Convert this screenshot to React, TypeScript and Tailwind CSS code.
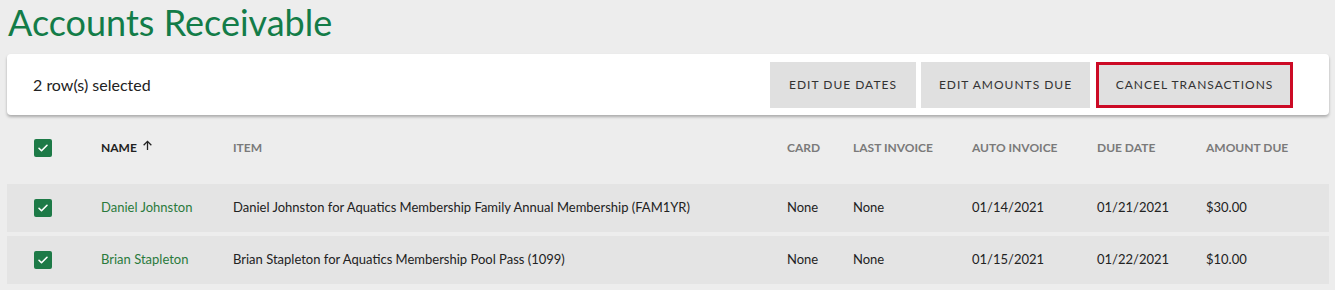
import React from "react";

const font = { fontFamily: "Lato, 'Open Sans', sans-serif" };

function Box() {
  return (
    <div className="w-[18px] h-[18px] rounded-[2px] bg-[#1d7a47] flex items-center justify-center">
      <svg width="12" height="12" viewBox="0 0 24 24" fill="none" stroke="white" strokeWidth="3.2" strokeLinecap="round" strokeLinejoin="round">
        <path d="M4 12.5l5 5L20 6.5" />
      </svg>
    </div>
  );
}

const cols = "grid grid-cols-[94px_132px_554px_66px_119px_125px_109px_1fr] items-center";

const rows = [
  {
    name: "Daniel Johnston",
    item: "Daniel Johnston for Aquatics Membership Family Annual Membership (FAM1YR)",
    card: "None",
    last: "None",
    auto: "01/14/2021",
    due: "01/21/2021",
    amt: "$30.00",
  },
  {
    name: "Brian Stapleton",
    item: "Brian Stapleton for Aquatics Membership Pool Pass (1099)",
    card: "None",
    last: "None",
    auto: "01/15/2021",
    due: "01/22/2021",
    amt: "$10.00",
  },
];

export default function App() {
  return (
    <div className="w-[1335px] h-[290px] bg-[#ededed] pl-[7px] pr-[6px] pt-[1px] overflow-hidden" style={font}>
      <h1 className="text-[36px] leading-[42px] text-[#137c48] pl-px">Accounts Receivable</h1>
      <div className="mt-[11px] h-[61px] bg-white rounded-[4px] shadow-[0_2px_3px_rgba(0,0,0,0.28)] flex items-center justify-between pl-[26px] pr-9">
        <span className="text-[16px] text-[#222]">2 row(s) selected</span>
        <div className="flex items-center gap-[5px]">
          <button className="h-[46px] w-[146px] bg-[#e0e0e0] text-[12px] tracking-[1px] text-[#333]">EDIT DUE DATES</button>
          <button className="h-[46px] w-[169px] bg-[#e0e0e0] text-[12px] tracking-[1px] text-[#333]">EDIT AMOUNTS DUE</button>
          <button className="h-[46px] w-[197px] ml-px bg-[#e0e0e0] border-[3px] border-[#cc0a25] text-[12px] tracking-[1px] text-[#333]">CANCEL TRANSACTIONS</button>
        </div>
      </div>
      <div className={`${cols} mt-[9px] h-12 text-[12px] font-bold text-[#7a7a7a]`}>
        <div className="pl-[27px]"><Box /></div>
        <div className="text-[#222] flex items-center">
          NAME
          <svg className="ml-[5px] -mt-[6px]" width="11" height="11" viewBox="0 0 12 12" fill="none" stroke="#222" strokeWidth="1.4">
            <path d="M6 11V1.5M1.8 5.7L6 1.5l4.2 4.2" />
          </svg>
        </div>
        <div>ITEM</div>
        <div>CARD</div>
        <div>LAST INVOICE</div>
        <div>AUTO INVOICE</div>
        <div>DUE DATE</div>
        <div>AMOUNT DUE</div>
      </div>
      <div className="mt-3 flex flex-col gap-1">
        {rows.map((r) => (
          <div key={r.name} className={`${cols} h-12 bg-[#e4e4e4] text-[13px] text-[#222]`}>
            <div className="pl-[27px]"><Box /></div>
            <div className="text-[#2a7a3c]">{r.name}</div>
            <div>{r.item}</div>
            <div>{r.card}</div>
            <div>{r.last}</div>
            <div>{r.auto}</div>
            <div>{r.due}</div>
            <div>{r.amt}</div>
          </div>
        ))}
      </div>
    </div>
  );
}
